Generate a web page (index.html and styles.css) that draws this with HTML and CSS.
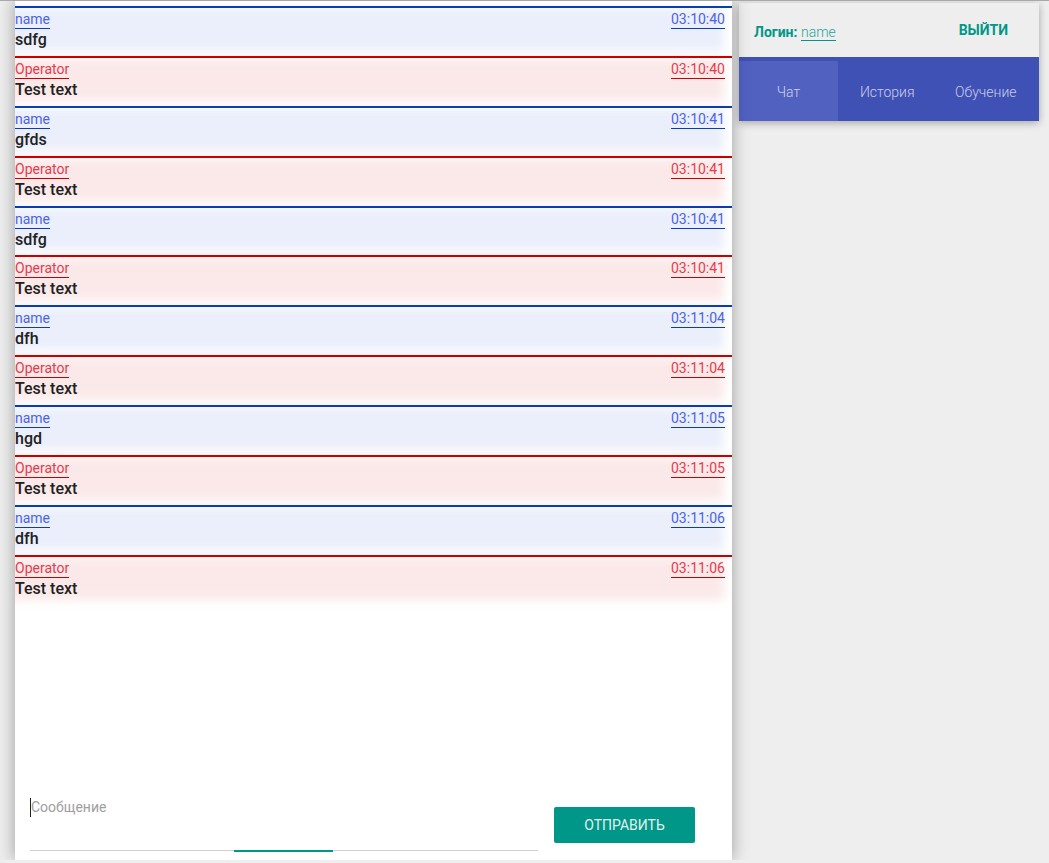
FILE: index.html
```html
<!DOCTYPE html>
<html>
<head>
<meta charset="utf-8">
<link rel="stylesheet" href="styles.css">
</head>
<body>
<div class="topline"></div>
<div class="page">
  <div class="chat">
    <div class="messages">
      <div class="msg user"><div class="meta"><span class="who">name</span><span class="time">03:10:40</span></div><div class="text">sdfg</div></div>
      <div class="msg op"><div class="meta"><span class="who">Operator</span><span class="time">03:10:40</span></div><div class="text">Test text</div></div>
      <div class="msg user"><div class="meta"><span class="who">name</span><span class="time">03:10:41</span></div><div class="text">gfds</div></div>
      <div class="msg op"><div class="meta"><span class="who">Operator</span><span class="time">03:10:41</span></div><div class="text">Test text</div></div>
      <div class="msg user"><div class="meta"><span class="who">name</span><span class="time">03:10:41</span></div><div class="text">sdfg</div></div>
      <div class="msg op"><div class="meta"><span class="who">Operator</span><span class="time">03:10:41</span></div><div class="text">Test text</div></div>
      <div class="msg user"><div class="meta"><span class="who">name</span><span class="time">03:11:04</span></div><div class="text">dfh</div></div>
      <div class="msg op"><div class="meta"><span class="who">Operator</span><span class="time">03:11:04</span></div><div class="text">Test text</div></div>
      <div class="msg user"><div class="meta"><span class="who">name</span><span class="time">03:11:05</span></div><div class="text">hgd</div></div>
      <div class="msg op"><div class="meta"><span class="who">Operator</span><span class="time">03:11:05</span></div><div class="text">Test text</div></div>
      <div class="msg user"><div class="meta"><span class="who">name</span><span class="time">03:11:06</span></div><div class="text">dfh</div></div>
      <div class="msg op"><div class="meta"><span class="who">Operator</span><span class="time">03:11:06</span></div><div class="text">Test text</div></div>
    </div>
    <div class="composer">
      <div class="field">
        <div class="input"><span class="caret"></span><span class="placeholder">Сообщение</span></div>
        <div class="underline"><span class="focus"></span></div>
      </div>
      <button class="send">Отправить</button>
    </div>
  </div>
  <div class="side">
    <div class="card">
      <div class="head">
        <div class="login"><b>Логин:</b> <span class="lname">name</span></div>
        <div class="logout">ВЫЙТИ</div>
      </div>
      <div class="tabs">
        <div class="tab active">Чат</div>
        <div class="tab">История</div>
        <div class="tab last">Обучение</div>
      </div>
    </div>
  </div>
</div>
</body>
</html>
```
FILE: styles.css
```css
html, body {
  margin: 0;
  padding: 0;
  background: #eeeeee;
  font-family: Roboto, "Liberation Sans", sans-serif;
  overflow: hidden;
}
.topline {
  height: 1px;
  background: #a8a8a8;
  position: absolute;
  left: 0; right: 0; top: 0;
  z-index: 5;
}
.page {
  display: flex;
  align-items: flex-start;
  padding-left: 15px;
}
.chat {
  width: 717px;
  height: 860px;
  background: #fff;
  box-shadow: 0 0 16px rgba(0,0,0,0.35);
  display: flex;
  flex-direction: column;
  overflow: hidden;
  position: relative;
  z-index: 1;
}
.messages {
  padding-top: 6px;
  display: flex;
  flex-direction: column;
}
.msg {
  height: 47.9px;
  border-top: 2px solid #0b3cb5;
  padding-right: 7px;
  position: relative;
}
.msg::before {
  content: "";
  position: absolute;
  left: -12px; right: 8px; top: 0; bottom: 5px;
  background: #ebeffb;
  filter: blur(5px);
  z-index: -1;
}
.msg.op { border-top-color: #c80000; }
.msg.op::before { background: #fbe9e9; }
.meta {
  display: flex;
  justify-content: space-between;
  padding-top: 3px;
  font-size: 14px;
  line-height: 16px;
  font-weight: 400;
}
.who, .time {
  border-bottom: 1px solid #0b3cb5;
  color: #4a64e4;
  padding-bottom: 1px;
}
.op .who, .op .time {
  border-bottom-color: #c80000;
  color: #e63a4c;
}
.text {
  font-size: 16px;
  font-weight: 500;
  color: #212121;
  line-height: 20px;
  padding-top: 1px;
}
.composer {
  margin-top: auto;
  display: flex;
  align-items: flex-end;
  padding: 0 37px 9px 15px;
}
.field {
  width: 508px;
}
.input {
  display: flex;
  align-items: center;
  height: 20px;
  margin-bottom: 33px;
}
.caret {
  width: 1px;
  height: 19px;
  background: #222;
}
.placeholder {
  font-size: 14px;
  color: #9e9e9e;
  font-weight: 400;
}
.underline {
  height: 1px;
  background: #d0d0d0;
  position: relative;
}
.focus {
  position: absolute;
  left: 204px;
  width: 99px;
  top: 0;
  height: 2px;
  background: #009688;
}
.send {
  margin-left: 16px;
  margin-bottom: 8px;
  width: 141px;
  height: 36px;
  border: none;
  border-radius: 2px;
  background: #009688;
  color: #e0f2ef;
  font-family: Roboto, "Liberation Sans", sans-serif;
  font-size: 14px;
  text-transform: uppercase;
  font-weight: 400;
  padding: 0;
}
.side {
  padding-left: 7px;
  padding-top: 3px;
}
.card {
  width: 300px;
  box-shadow: 0 2px 8px rgba(0,0,0,0.3);
}
.head {
  height: 54px;
  background: #eeeeee;
  display: flex;
  align-items: center;
  justify-content: space-between;
  padding: 0 31px 0 15px;
  color: #009688;
}
.login {
  font-size: 14px;
  padding-top: 4px;
}
.login b { font-weight: 700; }
.lname {
  border-bottom: 1px solid #009688;
  color: #26a69a;
  font-weight: 300;
  font-size: 14px;
}
.logout {
  font-size: 14px;
  font-weight: 700;
  margin-top: -1px;
}
.tabs {
  background: #3f51b5;
  display: flex;
  padding-top: 4px;
  height: 60px;
}
.tab {
  flex: 1;
  display: flex;
  align-items: center;
  justify-content: center;
  padding-top: 2px;
  font-size: 14px;
  color: rgba(255,255,255,0.72);
  font-weight: 300;
}
.tab.last { padding-right: 4px; }
.tab.active {
  background: #5161c0;
  flex: 0 0 99px;
}
```
